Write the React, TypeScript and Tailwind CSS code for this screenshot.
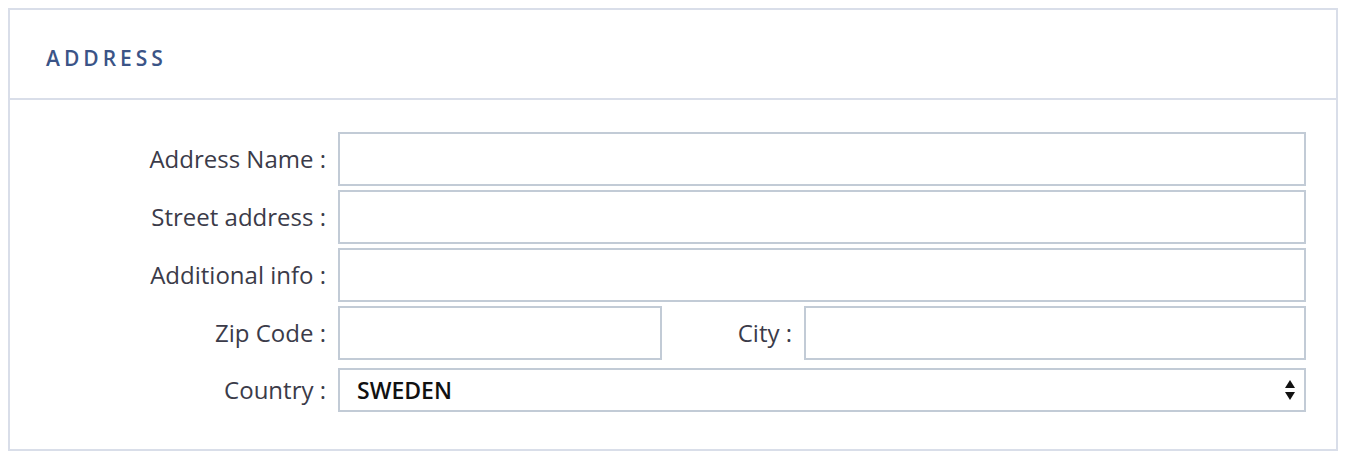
import React from 'react';

const font = { fontFamily: '"Open Sans", "Liberation Sans", sans-serif' };

function Label({ children }: { children: React.ReactNode }) {
  return (
    <label className="w-[328px] shrink-0 pr-3 text-right text-[24px] text-[#3b3b49]">
      {children}
    </label>
  );
}

function TextInput({ className = '' }: { className?: string }) {
  return (
    <input
      type="text"
      className={`h-[54px] border-2 border-[#c2cbd6] bg-white px-3 text-[21px] outline-none ${className}`}
    />
  );
}

export default function App() {
  return (
    <div className="min-h-[466px] bg-white pt-2 pr-3 pb-3 pl-2" style={font}>
      <section className="border-2 border-[#d9dee9] bg-white">
        {/* Header */}
        <div className="flex h-[90px] items-center border-b-2 border-[#d9dee9] px-9 pt-[10px]">
          <h2 className="text-[21px] font-semibold uppercase tracking-[4px] text-[#3b5487]">
            Address
          </h2>
        </div>

        {/* Form */}
        <div className="flex flex-col gap-1 pt-8 pr-[30px] pb-[37px]">
          <div className="flex items-center">
            <Label>Address Name :</Label>
            <TextInput className="flex-1" />
          </div>
          <div className="flex items-center">
            <Label>Street address :</Label>
            <TextInput className="flex-1" />
          </div>
          <div className="flex items-center">
            <Label>Additional info :</Label>
            <TextInput className="flex-1" />
          </div>
          <div className="flex items-center">
            <Label>Zip Code :</Label>
            <TextInput className="w-[324px]" />
            <label className="flex-1 pr-3 text-right text-[24px] text-[#3b3b49]">City :</label>
            <TextInput className="w-[502px]" />
          </div>
          <div className="flex items-center pt-1">
            <Label>Country :</Label>
            <div className="relative flex h-[44px] flex-1 items-center border-2 border-[#c2cbd6] bg-white pl-[17px]">
              <span className="text-[23px] font-semibold text-[#111]">SWEDEN</span>
              <svg
                className="absolute right-[9px] top-1/2 -translate-y-1/2"
                width="10"
                height="20"
                viewBox="0 0 10 20"
              >
                <polygon points="5,0 10,8 0,8" fill="#111" />
                <polygon points="0,12 10,12 5,20" fill="#111" />
              </svg>
            </div>
          </div>
        </div>
      </section>
    </div>
  );
}
